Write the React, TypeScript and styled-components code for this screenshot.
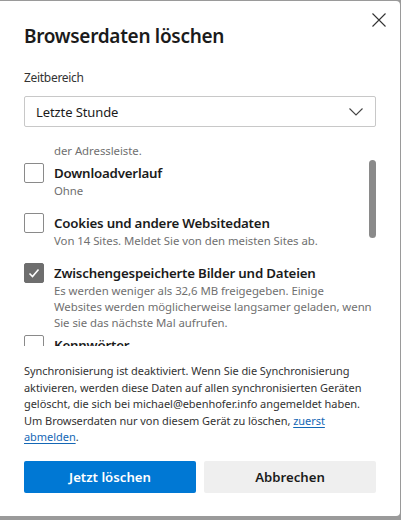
import styled, { createGlobalStyle } from 'styled-components';

const GlobalStyle = createGlobalStyle`
  html, body {
    margin: 0;
    padding: 0;
    background: #9a9a9a;
  }
  body {
    font-family: "Noto Sans", "Open Sans", sans-serif;
    color: #1b1b1b;
  }
`;

const Dialog = styled.div`
  position: relative;
  box-sizing: border-box;
  margin-top: 1px;
  width: 400px;
  height: 515px;
  background: #ffffff;
  border-radius: 0 4px 4px 0;
  padding: 0 24px;
  display: flex;
  flex-direction: column;
`;

const Title = styled.h1`
  margin: 21px 0 0;
  font-size: 19px;
  font-weight: 600;
  letter-spacing: -0.3px;
  line-height: 28px;
  color: #1b1b1b;
`;

const CloseButton = styled.button`
  position: absolute;
  top: 6px;
  right: 8px;
  width: 26px;
  height: 26px;
  border: 0;
  padding: 0;
  background: transparent;
  display: flex;
  align-items: center;
  justify-content: center;
`;

const Label = styled.div`
  margin-top: 19px;
  font-size: 12px;
  letter-spacing: -0.3px;
  line-height: 18px;
  color: #333;
`;

const Select = styled.div`
  box-sizing: border-box;
  margin-top: 9px;
  height: 31px;
  border: 1px solid #c8c8c8;
  border-radius: 2px;
  display: flex;
  align-items: center;
  justify-content: space-between;
  padding: 0 12px 0 11px;
  font-size: 13px;
  letter-spacing: -0.1px;
  color: #1b1b1b;
`;

const ScrollArea = styled.div`
  position: relative;
  margin-top: 16px;
  height: 203px;
  overflow: hidden;
`;

const Thumb = styled.div`
  position: absolute;
  right: 0;
  top: 17px;
  width: 7px;
  height: 78px;
  border-radius: 4px;
  background: #8a8a8a;
`;

const List = styled.div`
  display: flex;
  flex-direction: column;
  gap: 4px;
`;

const Item = styled.div`
  display: flex;
  gap: 10px;
  min-height: 46px;
`;

const Box = styled.span<{ $checked?: boolean }>`
  box-sizing: border-box;
  flex: none;
  width: 20px;
  height: 20px;
  border-radius: 2px;
  border: 1px solid ${(p) => (p.$checked ? '#6e6e6e' : '#8a8a8a')};
  background: ${(p) => (p.$checked ? '#6e6e6e' : '#fff')};
  display: flex;
  align-items: center;
  justify-content: center;
`;

const ItemText = styled.div`
  display: flex;
  flex-direction: column;
`;

const ItemTitle = styled.div`
  font-size: 13.3px;
  font-weight: 600;
  letter-spacing: -0.2px;
  line-height: 20px;
  color: #1b1b1b;
`;

const Sub = styled.div<{ $indent?: boolean }>`
  font-size: 11.4px;
  letter-spacing: -0.05px;
  line-height: 16px;
  color: #707070;
  white-space: nowrap;
  padding-left: ${(p) => (p.$indent ? '30px' : '0')};
`;

const SyncText = styled.p`
  margin: 17px 0 0;
  font-size: 11px;
  letter-spacing: -0.05px;
  line-height: 16.6px;
  color: #333;
  white-space: nowrap;
`;

const Link = styled.a`
  color: #1467b5;
  text-decoration: underline;
  text-underline-offset: 2px;
`;

const Buttons = styled.div`
  margin-top: 15px;
  display: grid;
  grid-template-columns: 1fr 1fr;
  gap: 8px;
`;

const Button = styled.button<{ $primary?: boolean }>`
  height: 32px;
  border: 0;
  border-radius: 2px;
  font-family: inherit;
  font-size: 13.2px;
  font-weight: 600;
  background: ${(p) => (p.$primary ? '#0078d4' : '#efefef')};
  color: ${(p) => (p.$primary ? '#ffffff' : '#1b1b1b')};
`;

const Check = () => (
  <svg width="14" height="14" viewBox="0 0 14 14">
    <path d="M2.5 7.5 L5.5 10.5 L11.5 3.5" fill="none" stroke="#fff" strokeWidth="1.6" />
  </svg>
);

const items = [
  { title: 'Downloadverlauf', sub: ['Ohne'] },
  { title: 'Cookies und andere Websitedaten', sub: ['Von 14 Sites. Meldet Sie von den meisten Sites ab.'] },
  {
    title: 'Zwischengespeicherte Bilder und Dateien',
    checked: true,
    sub: [
      'Es werden weniger als 32,6 MB freigegeben. Einige',
      'Websites werden möglicherweise langsamer geladen, wenn',
      'Sie sie das nächste Mal aufrufen.',
    ],
  },
  { title: 'Kennwörter', sub: [] as string[] },
];

export default function App() {
  return (
    <>
      <GlobalStyle />
      <Dialog>
        <CloseButton aria-label="Schließen">
          <svg width="14" height="14" viewBox="0 0 14 14">
            <path d="M0.5 0.5 L13.5 13.5 M13.5 0.5 L0.5 13.5" stroke="#333" strokeWidth="1.1" />
          </svg>
        </CloseButton>
        <Title>Browserdaten löschen</Title>
        <Label>Zeitbereich</Label>
        <Select>
          <span>Letzte Stunde</span>
          <svg width="14" height="8" viewBox="0 0 14 8">
            <path d="M0.5 0.5 L7 7 L13.5 0.5" fill="none" stroke="#444" strokeWidth="1.1" />
          </svg>
        </Select>
        <ScrollArea>
          <Thumb />
          <List>
            <Sub $indent>der Adressleiste.</Sub>
            {items.map((it) => (
              <Item key={it.title}>
                <Box $checked={it.checked}>{it.checked && <Check />}</Box>
                <ItemText>
                  <ItemTitle>{it.title}</ItemTitle>
                  {it.sub.map((s) => (
                    <Sub key={s}>{s}</Sub>
                  ))}
                </ItemText>
              </Item>
            ))}
          </List>
        </ScrollArea>
        <SyncText>
          Synchronisierung ist deaktiviert. Wenn Sie die Synchronisierung
          <br />
          aktivieren, werden diese Daten auf allen synchronisierten Geräten
          <br />
          gelöscht, die sich bei michael@ebenhofer.info angemeldet haben.
          <br />
          Um Browserdaten nur von diesem Gerät zu löschen, <Link href="#">zuerst</Link>
          <br />
          <Link href="#">abmelden</Link>.
        </SyncText>
        <Buttons>
          <Button $primary>Jetzt löschen</Button>
          <Button>Abbrechen</Button>
        </Buttons>
      </Dialog>
    </>
  );
}
